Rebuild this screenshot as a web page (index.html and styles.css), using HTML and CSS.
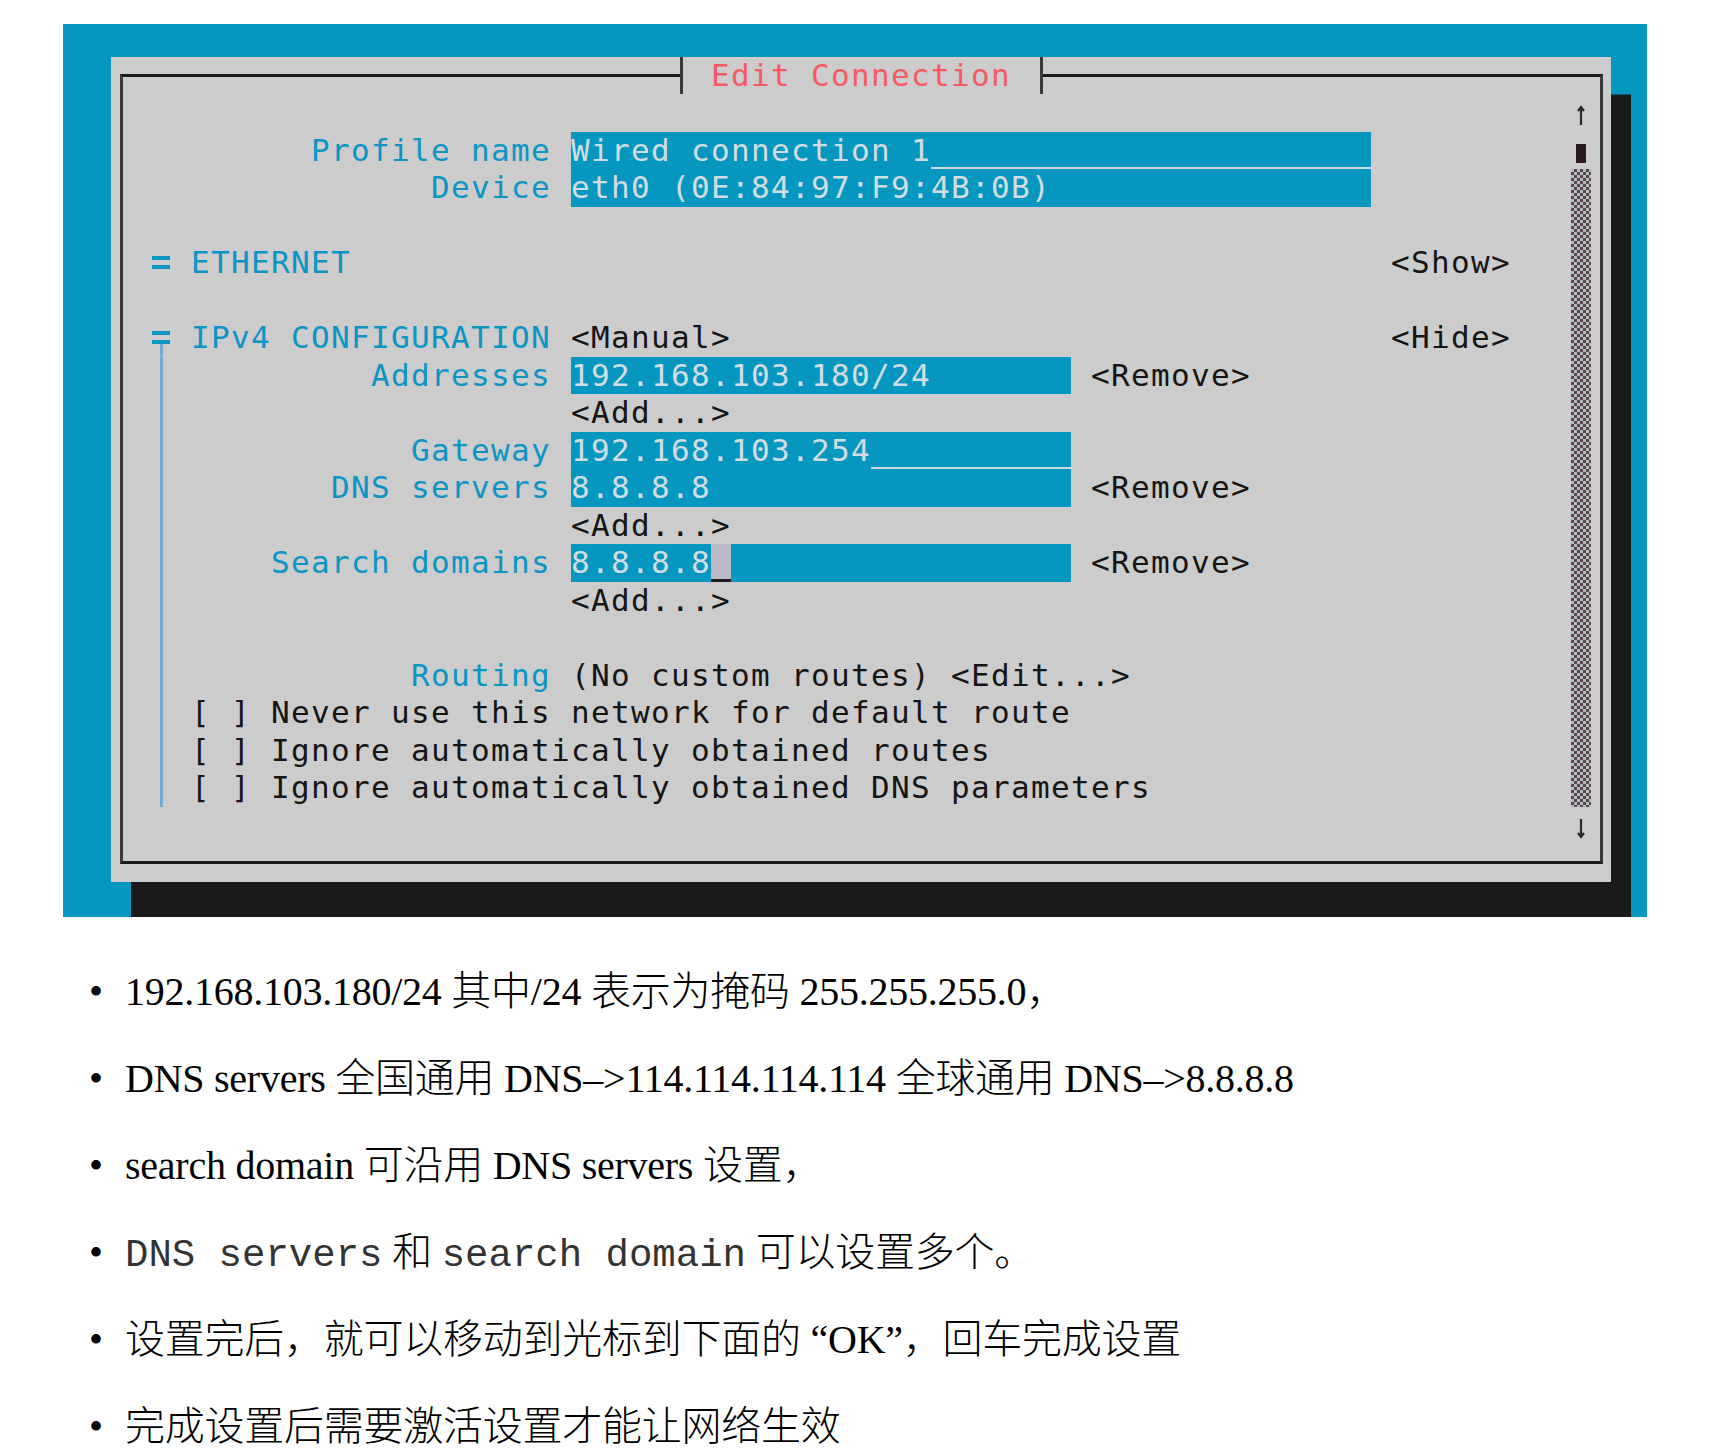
FILE: index.html
```html
<!DOCTYPE html>
<html lang="zh-CN">
<head>
<meta charset="utf-8">
<title>Edit Connection</title>
<link rel="stylesheet" href="styles.css">
</head>
<body>
<div class="term">
  <div class="panel">
    <div class="frame">
      <div class="title"><span>Edit Connection</span></div>
      <div class="screen">
<div class="row"></div>
<div class="row">         <span class="lbl">Profile name</span> <span class="fld w40">Wired connection 1<span class="ul"></span></span></div>
<div class="row">               <span class="lbl">Device</span> <span class="fld w40">eth0 (0E:84:97:F9:4B:0B)</span></div>
<div class="row"></div>
<div class="row"> <span class="dbl"></span> <span class="lbl">ETHERNET</span>                                                    &lt;Show&gt;</div>
<div class="row"></div>
<div class="row"> <span class="dbl tee"></span> <span class="lbl">IPv4 CONFIGURATION</span> &lt;Manual&gt;                                 &lt;Hide&gt;</div>
<div class="ipv4-body">
<div class="row">          <span class="lbl">Addresses</span> <span class="fld w25">192.168.103.180/24</span> &lt;Remove&gt;</div>
<div class="row">                    &lt;Add...&gt;</div>
<div class="row">            <span class="lbl">Gateway</span> <span class="fld w25">192.168.103.254<span class="ul"></span></span></div>
<div class="row">        <span class="lbl">DNS servers</span> <span class="fld w25">8.8.8.8</span> &lt;Remove&gt;</div>
<div class="row">                    &lt;Add...&gt;</div>
<div class="row">     <span class="lbl">Search domains</span> <span class="fld w25">8.8.8.8<span class="cur"></span></span> &lt;Remove&gt;</div>
<div class="row">                    &lt;Add...&gt;</div>
<div class="row"></div>
<div class="row">            <span class="lbl">Routing</span> (No custom routes) &lt;Edit...&gt;</div>
<div class="row"> [ ] Never use this network for default route</div>
<div class="row"> [ ] Ignore automatically obtained routes</div>
<div class="row"> [ ] Ignore automatically obtained DNS parameters</div>
</div>
<div class="row"></div>
      </div>
      <div class="scroll">
        <div class="sb-cell"><svg width="20" height="38" viewBox="0 0 20 38"><path d="M10 13v18M7 17l3-4 3 4" stroke="#2b2b2b" stroke-width="2.2" fill="none"/></svg></div>
        <div class="sb-cell"><span class="thumb"></span></div>
        <div class="sb-track"></div>
        <div class="sb-cell"><svg width="20" height="38" viewBox="0 0 20 38"><path d="M10 12v18M7 26l3 4 3-4" stroke="#2b2b2b" stroke-width="2.2" fill="none"/></svg></div>
      </div>
    </div>
  </div>
</div>
<ul class="notes">
  <li>192.168.103.180/24 其中/24 表示为掩码 255.255.255.0，</li>
  <li>DNS servers 全国通用 DNS–&gt;114.114.114.114 全球通用 DNS–&gt;8.8.8.8</li>
  <li>search domain 可沿用 DNS servers 设置，</li>
  <li><span class="mono">DNS servers</span> 和 <span class="mono">search domain</span> 可以设置多个。</li>
  <li>设置完后，就可以移动到光标到下面的 “OK”，回车完成设置</li>
  <li>完成设置后需要激活设置才能让网络生效</li>
</ul>
</body>
</html>
```
FILE: styles.css
```css
html, body {
  margin: 0;
  background: #ffffff;
}

.term {
  width: 1584px;
  height: 893px;
  margin: 24px 0 0 63px;
  padding: 32.75px 0 0 48px;
  box-sizing: border-box;
  background: #0597c0;
  overflow: hidden;
}

.panel {
  width: 1500px;
  height: 825px;
  box-sizing: border-box;
  padding: 17.25px 8.5px 0;
  background: #cccccc;
  box-shadow: 20px 37.5px 0 #1a1a1a;
  font-family: "DejaVu Sans Mono", monospace;
  font-size: 31px;
  letter-spacing: calc(20px - 0.60205em);
  line-height: 37.5px;
  color: #151515;
}

.frame {
  position: relative;
  height: 789.75px;
  box-sizing: border-box;
  border-top: 3px solid #1a1a1a;
  border-bottom: 3px solid #1a1a1a;
  border-left: 3px solid #3a3a3a;
  border-right: 3px solid #3a3a3a;
  padding: 17.25px 8.5px 0;
  display: flex;
}

.title {
  position: absolute;
  top: -20.25px;
  left: 557px;
  width: 363px;
  height: 37.5px;
  box-sizing: border-box;
  border-left: 3px solid #3a3a3a;
  border-right: 3px solid #3a3a3a;
  background: #cccccc;
  padding-left: 28.5px;
  color: #f55a62;
  white-space: pre;
}

.screen {
  width: 1440px;
}

.row {
  height: 37.5px;
  white-space: pre;
}

.lbl {
  color: #0a95c5;
}

.fld {
  display: inline-flex;
  vertical-align: top;
  height: 37.5px;
  background: #0597c0;
  color: #d2dde2;
}

.w40 { width: 800px; }
.w25 { width: 500px; }

.ul {
  flex: 1;
  box-sizing: border-box;
  border-bottom: 2px solid #cfd9dd;
}

.cur {
  width: 20px;
  box-sizing: border-box;
  background: #b9b9c7;
  border-bottom: 3px solid #1d1d1d;
}

.dbl {
  display: inline-block;
  vertical-align: top;
  width: 20px;
  height: 37.5px;
  background:
    linear-gradient(#0a95c5, #0a95c5) 1px 12px / 18px 4px no-repeat,
    linear-gradient(#0a95c5, #0a95c5) 1px 21px / 18px 4px no-repeat;
}

.dbl.tee {
  background:
    linear-gradient(#0a95c5, #0a95c5) 1px 12px / 18px 4px no-repeat,
    linear-gradient(#0a95c5, #0a95c5) 1px 21px / 18px 4px no-repeat,
    linear-gradient(#72aad6, #72aad6) 8.5px 25px / 3px 12.5px no-repeat;
}

.ipv4-body {
  margin-left: 28.5px;
  border-left: 3px solid #72aad6;
  padding-left: 8.5px;
}

.scroll {
  width: 20px;
  display: flex;
  flex-direction: column;
}

.sb-cell {
  height: 37.5px;
  display: flex;
  align-items: center;
  justify-content: center;
}

.sb-cell svg {
  display: block;
}

.thumb {
  display: block;
  width: 10px;
  height: 19px;
  background: #2a1a1d;
  margin-top: 6px;
}

.sb-track {
  height: 637.5px;
  background: repeating-conic-gradient(#5b4650 0 25%, #b2bcbf 0 50%) 0 0 / 6px 6px;
}

.notes {
  list-style: none;
  margin: 30.5px 0 0;
  padding: 0 0 0 89px;
  font-family: "Liberation Serif", "Noto Sans CJK SC", serif;
  font-size: 40px;
  font-weight: 300;
  letter-spacing: -0.25px;
  line-height: 87px;
  color: #000000;
}

.notes li {
  height: 87px;
  white-space: nowrap;
}

.notes li::before {
  content: "•";
  display: inline-block;
  width: 36px;
}

.mono {
  font-family: "Liberation Mono", "Noto Sans CJK SC", monospace;
  font-size: 39px;
  letter-spacing: 0;
  color: #333333;
}
```
